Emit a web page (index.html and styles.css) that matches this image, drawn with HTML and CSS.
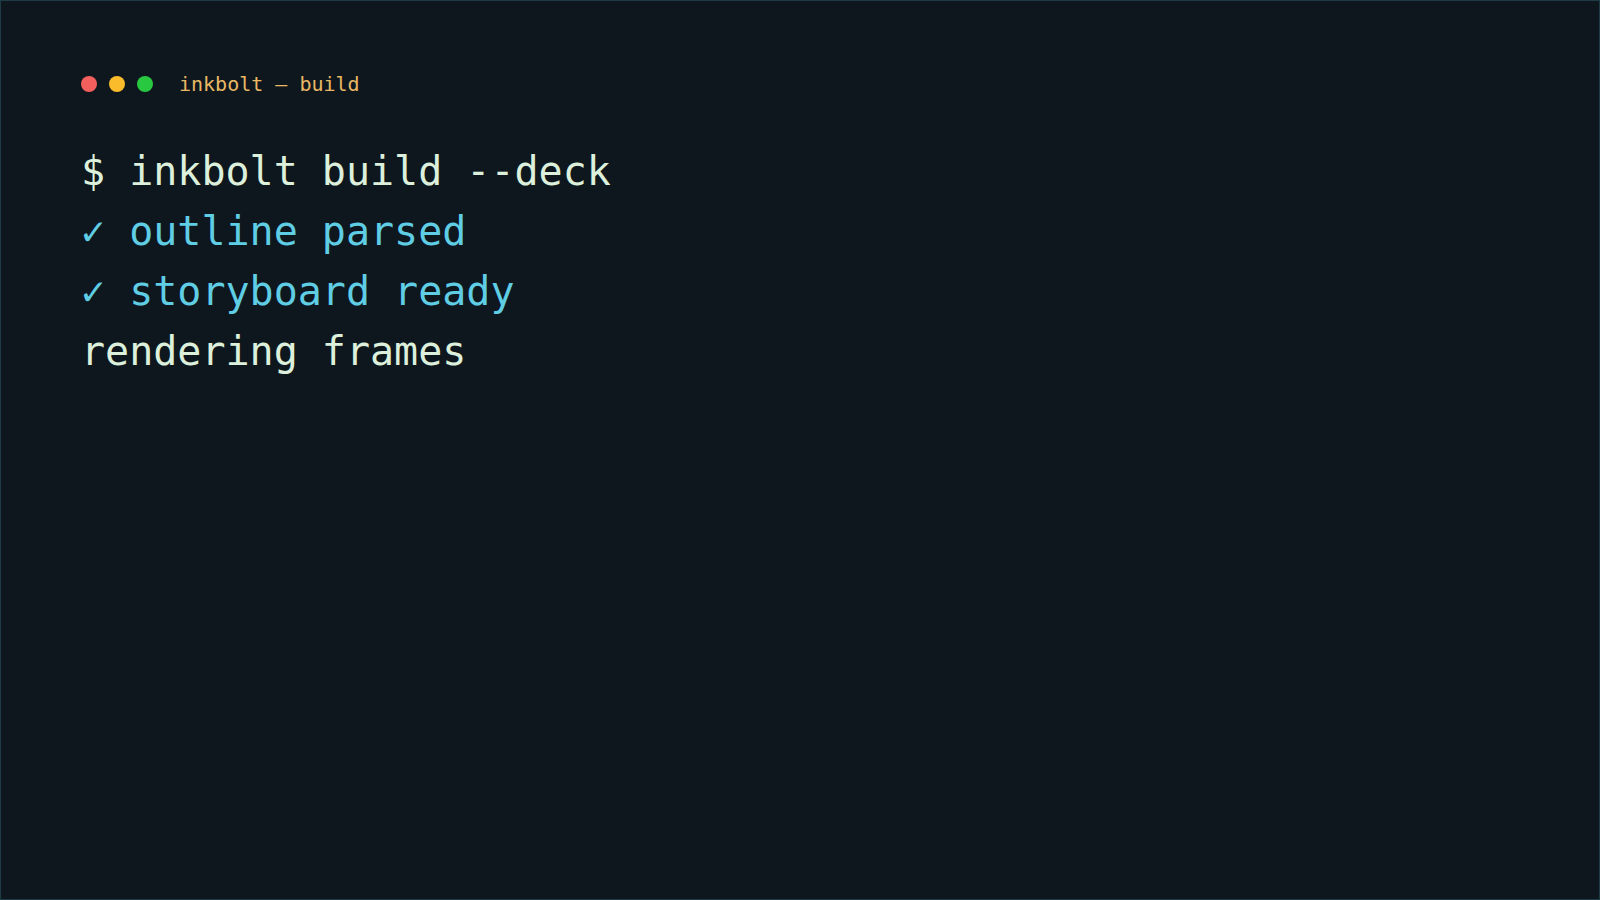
FILE: index.html
```html
<!DOCTYPE html>
<html lang="en">
<head>
<meta charset="utf-8">
<title>inkbolt — build</title>
<link rel="stylesheet" href="styles.css">
</head>
<body>
<main class="terminal">
  <header class="titlebar">
    <span class="dot dot-red"></span>
    <span class="dot dot-yellow"></span>
    <span class="dot dot-green"></span>
    <span class="title">inkbolt — build</span>
  </header>
  <div class="output">
    <div class="line cmd">$ inkbolt build --deck</div>
    <div class="line ok">✓ outline parsed</div>
    <div class="line ok">✓ storyboard ready</div>
    <div class="line cmd">rendering frames</div>
  </div>
</main>
</body>
</html>
```
FILE: styles.css
```css
html, body {
  margin: 0;
  padding: 0;
  width: 1600px;
  height: 900px;
  background: #0f171e;
  overflow: hidden;
}
.terminal {
  box-sizing: border-box;
  width: 1600px;
  height: 900px;
  border: 1px solid #1f3b46;
  background: #0f171e;
  padding: 74px 0 0 80px;
  font-family: "DejaVu Sans Mono", "Liberation Mono", monospace;
}
.titlebar {
  display: flex;
  align-items: center;
  height: 18px;
}
.dot {
  width: 16px;
  height: 16px;
  border-radius: 50%;
  margin-right: 12px;
}
.dot-red { background: #f25f5c; }
.dot-yellow { background: #fbbc2c; }
.dot-green { background: #28c840; }
.title {
  margin-left: 14px;
  font-size: 20px;
  color: #e8b864;
  line-height: 18px;
}
.output {
  margin-top: 48px;
}
.line {
  font-size: 40px;
  line-height: 60px;
  white-space: pre;
}
.cmd { color: #dcf0dc; }
.ok { color: #5fcde4; }
```
